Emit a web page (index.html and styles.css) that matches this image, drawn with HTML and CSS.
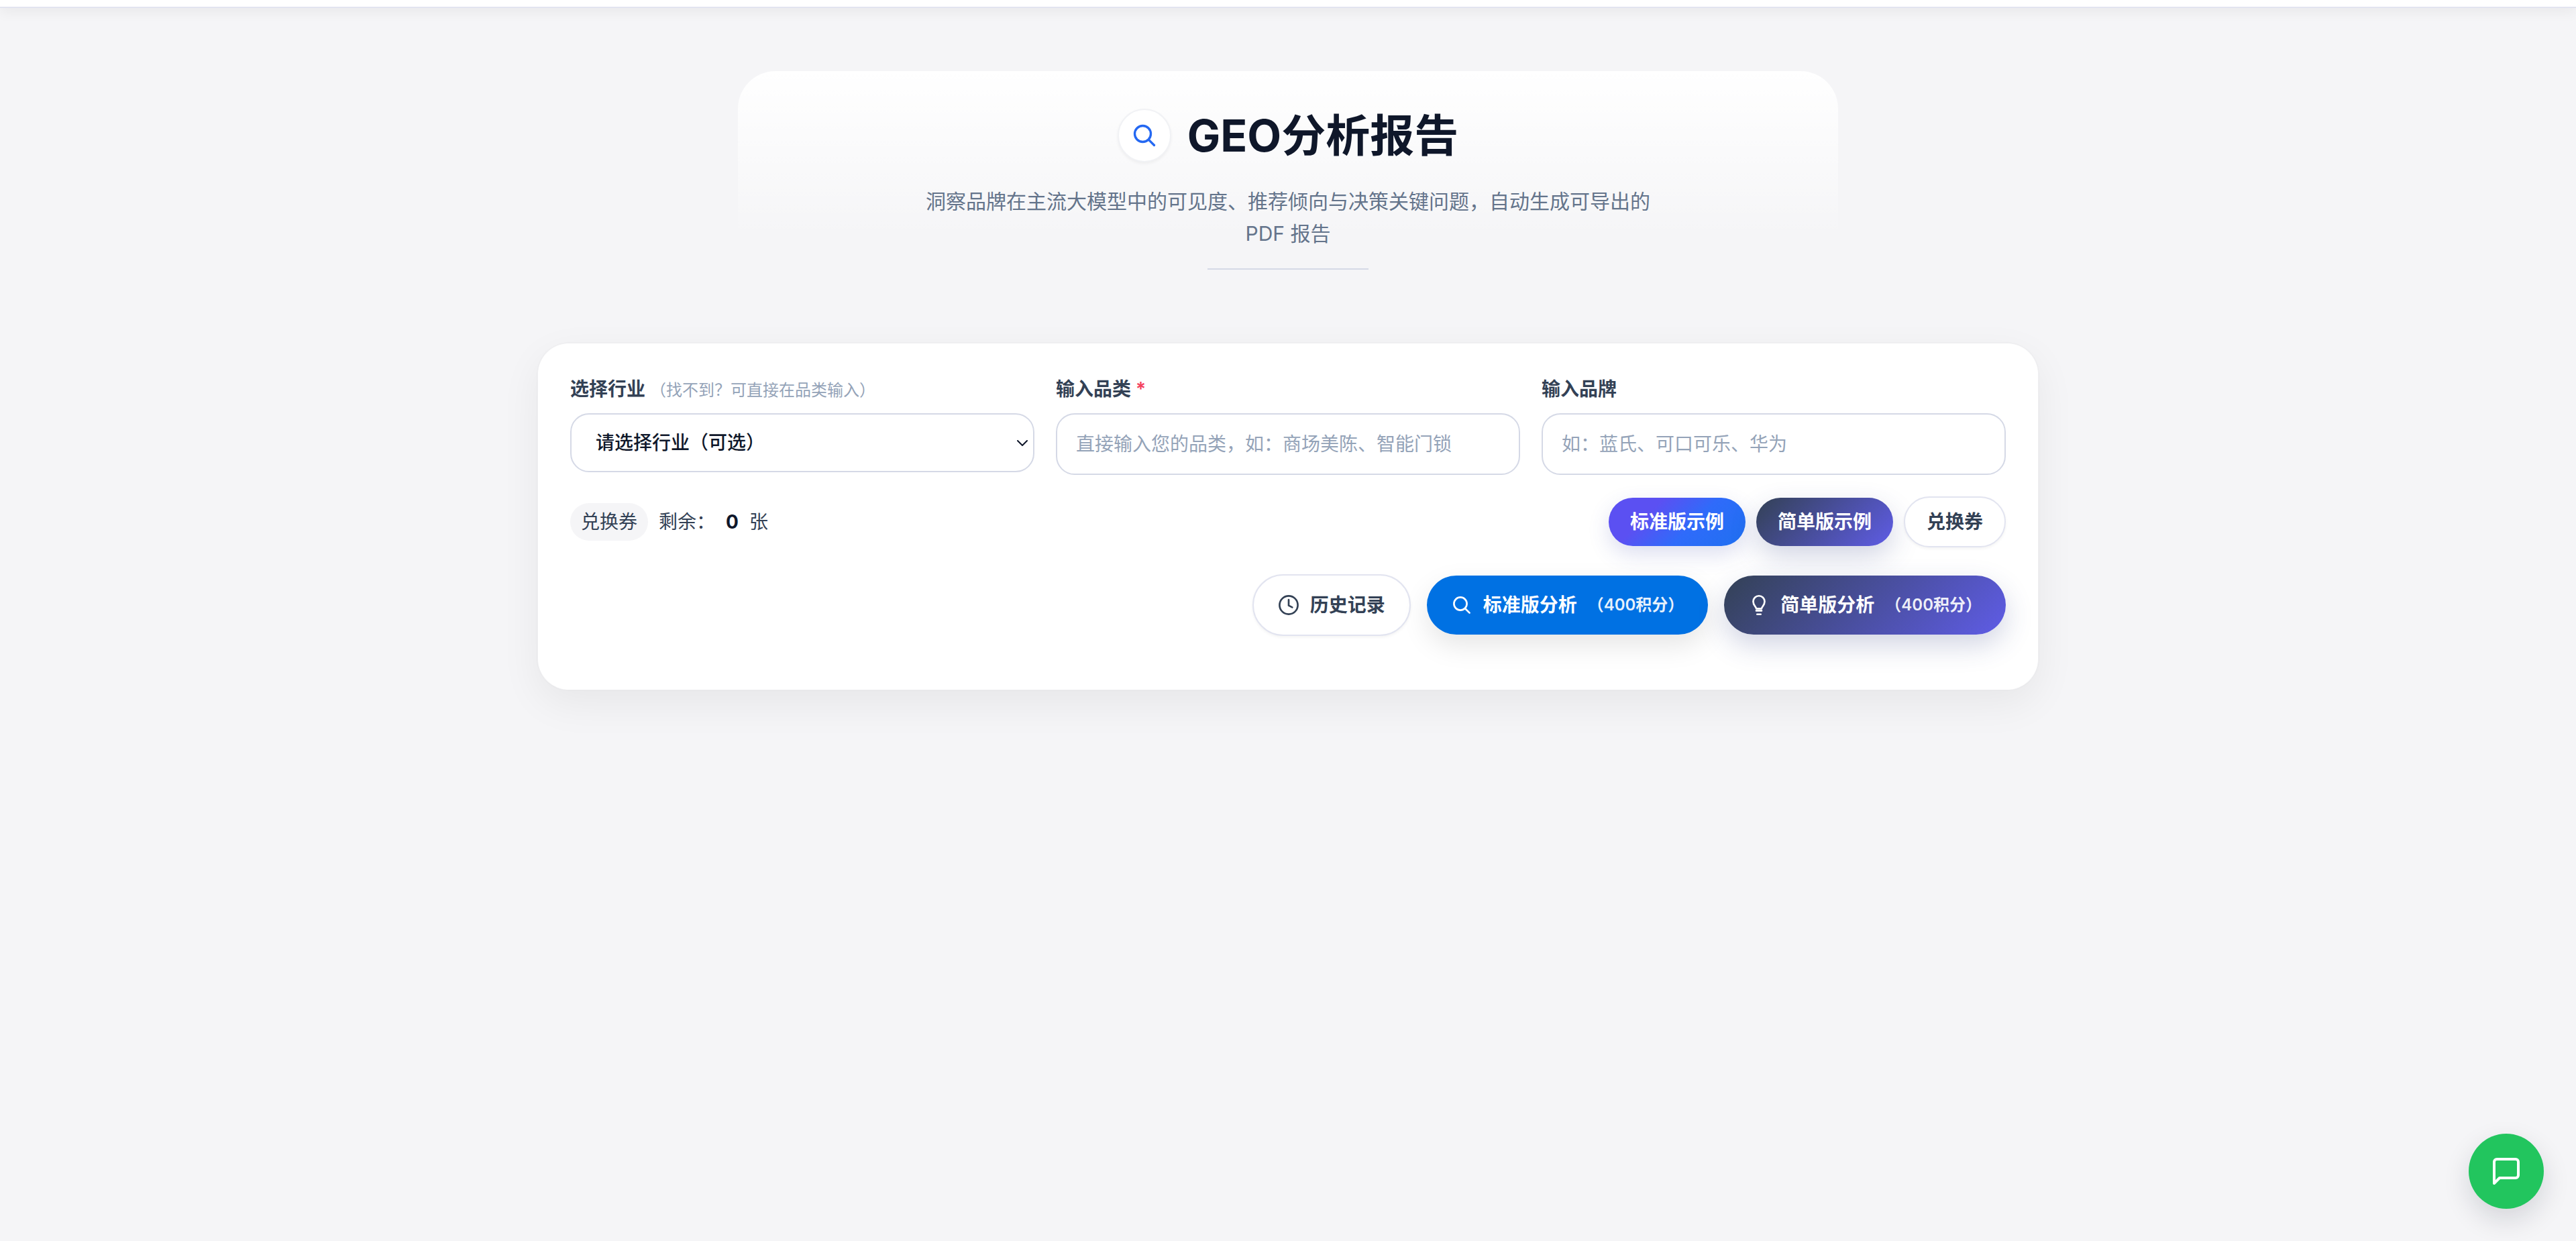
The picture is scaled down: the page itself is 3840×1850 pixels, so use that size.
FILE: index.html
```
<!DOCTYPE html>
<html lang="zh-CN">
<head>
    <meta charset="UTF-8">
    <meta name="viewport" content="width=device-width, initial-scale=1.0" />
    <title>GEO分析报告</title>
    <link rel="stylesheet" href="styles.css">
</head>
<body>

    <header class="topbar"></header>

    <main class="page">
        <section class="hero">
            <div class="hero-title">
                <span class="hero-icon">
                    <svg viewBox="0 0 24 24"><circle cx="10.5" cy="10.5" r="7.2"/><path d="M20.700 20.700l-5-5"/></svg>
                </span>
                <h1>GEO分析报告</h1>
            </div>
            <p>洞察品牌在主流大模型中的可见度、推荐倾向与决策关键问题，自动生成可导出的 PDF 报告</p>
            <div class="hero-line"></div>
        </section>

        <form class="card">
            <div class="fields">
                <div class="field">
                    <label for="industry">选择行业 <span class="hint">（找不到？可直接在品类输入）</span></label>
                    <div class="select-wrap">
                        <select id="industry">
                            <option>请选择行业（可选）</option>
                        </select>
                        <svg class="arrow" viewBox="0 0 16 10"><path d="M1 1l7 7 7-7"/></svg>
                    </div>
                </div>
                <div class="field">
                    <label for="category">输入品类 <span class="required">*</span></label>
                    <input id="category" type="text" placeholder="直接输入您的品类，如：商场美陈、智能门锁">
                </div>
                <div class="field">
                    <label for="brand">输入品牌</label>
                    <input id="brand" type="text" placeholder="如：蓝氏、可口可乐、华为">
                </div>
            </div>

            <div class="coupon-row">
                <div class="coupon">
                    <span class="tag">兑换券</span>
                    <span>剩余：</span>
                    <b>0</b>
                    <span>张</span>
                </div>
                <div class="samples">
                    <button type="button" class="btn small blue-violet">标准版示例</button>
                    <button type="button" class="btn small slate">简单版示例</button>
                    <button type="button" class="btn small outline">兑换券</button>
                </div>
            </div>

            <div class="actions">
                <button type="button" class="btn outline">
                    <svg viewBox="0 0 24 24"><circle cx="12" cy="12" r="10.2"/><path d="M12 6v6.5l4 2"/></svg>
                    历史记录
                </button>
                <button type="button" class="btn primary">
                    <svg viewBox="0 0 24 24"><circle cx="10.5" cy="10.5" r="7.2"/><path d="M20.700 20.700l-5-5"/></svg>
                    标准版分析
                    <span class="cost">（400积分）</span>
                </button>
                <button type="button" class="btn slate">
                    <svg viewBox="0 0 24 24"><path d="M9 16c0-2-3.400-3.800-3.400-7.900a6.400 6.400 0 0 1 12.800 0c0 4.100-3.400 5.900-3.400 7.900zM9 18.300h6M10 22.300h4"/></svg>
                    简单版分析
                    <span class="cost">（400积分）</span>
                </button>
            </div>
        </form>
    </main>

    <button type="button" class="chat" aria-label="在线客服">
        <svg viewBox="0 0 24 24"><path d="M21 15a2 2 0 0 1-2 2H7l-4 4V5a2 2 0 0 1 2-2h14a2 2 0 0 1 2 2z"/></svg>
    </button>

</body>
</html>
```
FILE: styles.css
```
* {
    padding: 0;
    margin: 0;
    box-sizing: border-box;
}

body {
    min-height: 100vh;
    background: #f5f5f7;
    font-family: Inter, "Noto Sans CJK SC", sans-serif;
    font-size: 28px;
    line-height: 40px;
    color: #334155;
}

button, input, select {
    font: inherit;
}

svg {
    fill: none;
    stroke: currentColor;
    stroke-width: 2;
    stroke-linecap: round;
    stroke-linejoin: round;
}

.topbar {
    height: 12px;
    background: #ffffff;
    border-bottom: 2px solid #e2e4f0;
    box-shadow: 0 4px 20px rgba(0, 0, 0, 0.08);
}

.page {
    padding: 94px 32px;
}

/* title block */
.hero {
    max-width: 1640px;
    margin: 0 auto 108px;
    padding-top: 56px;
    display: flex;
    flex-direction: column;
    align-items: center;
    text-align: center;
    border-radius: 56px 56px 0 0;
    background: linear-gradient(#ffffff, rgba(255, 255, 255, 0) 84%);
}

.hero-title {
    display: flex;
    align-items: center;
    gap: 24px;
}

.hero-icon {
    width: 80px;
    height: 80px;
    display: flex;
    align-items: center;
    justify-content: center;
    border: 2px solid #f1f2f5;
    border-radius: 50%;
    background: #ffffff;
    color: #2468f2;
    box-shadow: 0 2px 4px rgba(0, 0, 0, 0.05);
}

.hero-icon svg {
    width: 40px;
    height: 40px;
}

.hero h1 {
    font-size: 66px;
    font-weight: 700;
    line-height: 80px;
    color: #0f172a;
}

.hero p {
    max-width: 1120px;
    margin-top: 34px;
    font-size: 30px;
    line-height: 48px;
    color: #64748b;
}

.hero-line {
    width: 240px;
    height: 2px;
    margin-top: 28px;
    background: #d5d9e6;
}

/* form card */
.card {
    max-width: 2240px;
    margin: 0 auto;
    padding: 48px 48px 80px;
    border: 2px solid rgba(0, 0, 0, 0.02);
    border-radius: 48px;
    background: #ffffff;
    background-clip: padding-box;
    box-shadow: 0 20px 60px rgba(0, 0, 0, 0.06);
}

.fields {
    display: grid;
    grid-template-columns: repeat(3, 1fr);
    align-items: start;
    gap: 32px;
}

.field label {
    display: block;
    margin-bottom: 16px;
    font-weight: 600;
}

.hint {
    font-size: 24px;
    font-weight: 400;
    line-height: 24px;
    color: #94a3b8;
}

.required {
    color: #f43f5e;
}

.field input,
.field select {
    display: block;
    width: 100%;
    height: 92px;
    padding: 0 28px;
    border: 2px solid #d5d9e6;
    border-radius: 28px;
    background: #ffffff;
    color: #0f172a;
}

.field input::placeholder {
    color: #94a3b8;
}

.field select {
    height: 88px;
    padding: 0 36px;
    appearance: none;
    font-weight: 500;
}

.select-wrap {
    position: relative;
}

.arrow {
    position: absolute;
    right: 10px;
    top: 40px;
    width: 16px;
    height: 10px;
    color: #0f172a;
    pointer-events: none;
}

.coupon-row {
    display: flex;
    align-items: center;
    justify-content: space-between;
    margin-top: 32px;
}

.coupon,
.samples {
    display: flex;
    align-items: center;
    gap: 16px;
}

.coupon b {
    color: #0f172a;
}

.tag {
    padding: 8px 16px;
    border-radius: 28px;
    background: #f5f5f7;
}

/* buttons */
.btn {
    display: flex;
    align-items: center;
    gap: 16px;
    padding: 24px 36px;
    border: none;
    border-radius: 48px;
    font-weight: 600;
    color: #ffffff;
    cursor: pointer;
}

.btn svg {
    width: 32px;
    height: 32px;
}

.btn.small {
    padding: 16px 32px;
}

.btn.outline {
    border: 2px solid #e2e4f0;
    background: #ffffff;
    color: #334155;
    box-shadow: 0 2px 4px rgba(0, 0, 0, 0.05);
}

.blue-violet {
    background: linear-gradient(135deg, #5b50f2 30%, #2f6bfa 60%, #1f70f0);
    box-shadow: 0 12px 32px rgba(60, 70, 170, 0.18);
}

.slate {
    background: linear-gradient(135deg, #334155, #5f5ce6);
    box-shadow: 0 16px 40px rgba(51, 65, 130, 0.22);
}

.primary {
    background: #0071e3;
    box-shadow: 0 16px 40px rgba(0, 0, 0, 0.1);
}

.cost {
    font-size: 24px;
    opacity: 0.9;
}

.actions {
    display: flex;
    align-items: center;
    justify-content: flex-end;
    gap: 24px;
    margin-top: 40px;
}

.chat {
    position: fixed;
    right: 48px;
    bottom: 48px;
    width: 112px;
    height: 112px;
    display: flex;
    align-items: center;
    justify-content: center;
    border: none;
    border-radius: 50%;
    background: #22c55e;
    color: #ffffff;
    box-shadow: 0 16px 40px rgba(15, 23, 42, 0.14);
}

.chat svg {
    width: 48px;
    height: 48px;
}
```
